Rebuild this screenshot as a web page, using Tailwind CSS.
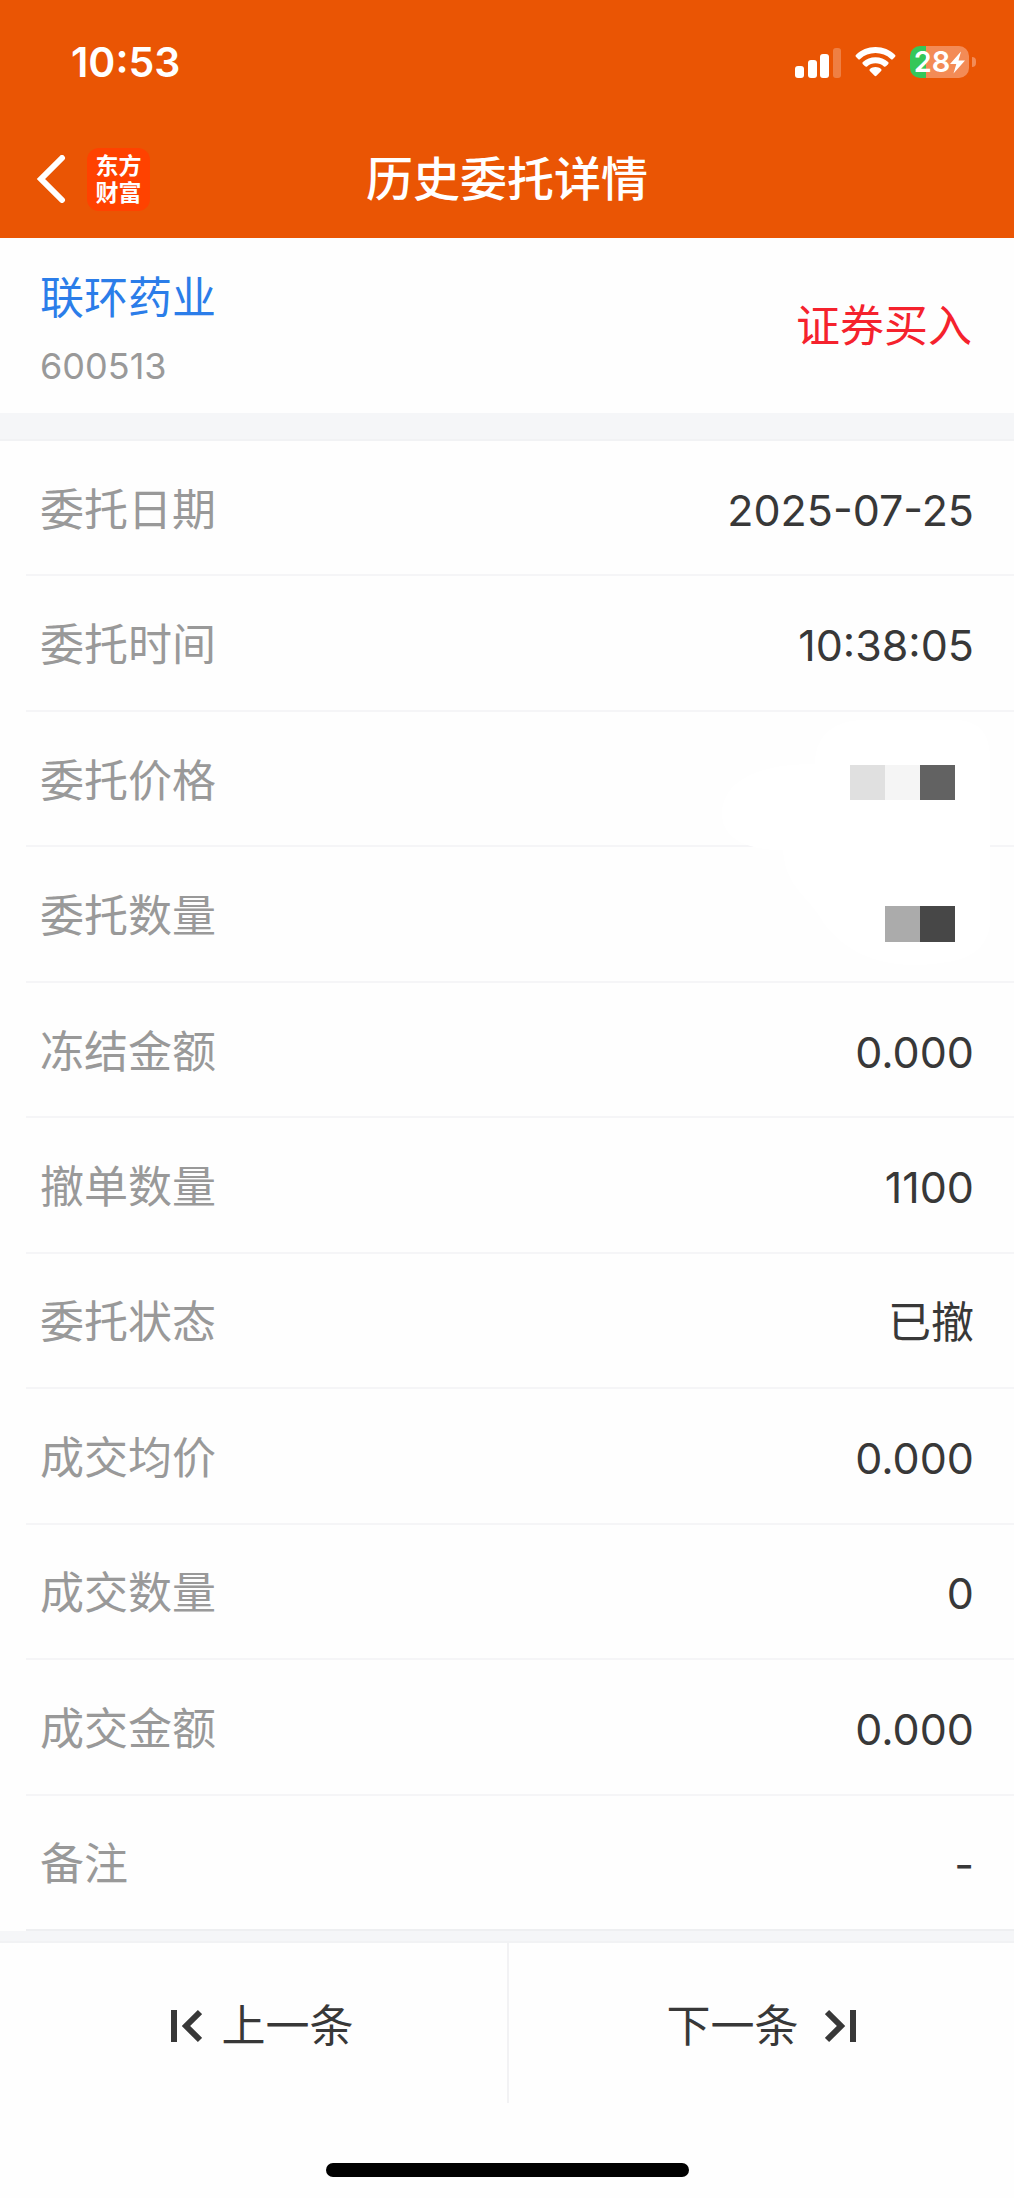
<!DOCTYPE html>
<html lang="zh-CN">
<head>
  <meta charset="UTF-8">
  <meta name="viewport" content="width=device-width, initial-scale=1.0">
  <title>历史委托详情</title>
  <script src="https://cdn.jsdelivr.net/npm/@tailwindcss/browser@4"></script>
</head>
<body class="min-h-screen flex flex-col bg-[#fefefe] text-[#383838] font-['Inter','Noto_Sans_CJK_SC',sans-serif]">

  <header class="bg-[#ea5504] text-white">
    <!-- Status bar -->
    <div class="h-[120px] pt-1 pl-[71px] pr-[38px] flex items-center justify-between">
      <span class="text-[41px] leading-[50px] font-semibold">10:53</span>
      <div class="flex items-center gap-[14px]">
        <svg class="w-[46px] h-[32px]" viewBox="0 0 46 32" fill="currentColor" aria-hidden="true">
          <rect x="0" y="20" width="9" height="12" rx="3"/>
          <rect x="13" y="14" width="9" height="18" rx="3"/>
          <rect x="25" y="8" width="9" height="24" rx="3"/>
          <rect x="38" y="2" width="8" height="30" rx="3" opacity=".25"/>
        </svg>
        <svg class="w-[41px] h-[31px]" viewBox="0 0 42 32" fill="currentColor" aria-hidden="true">
          <path d="M21 0C13 0 6 3 1 8c-.8.8-.8 1.500 0 2.300l2 2c.7.700 1.500.7 2.200 0C9.500 8.500 15 6.300 21 6.300s11.500 2.200 15.800 6c.7.700 1.500.7 2.200 0l2-2c.8-.8.8-1.500 0-2.300C36 3 29 0 21 0z"/>
          <path d="M21 10.500c-5 0-9.500 1.800-13 5-.7.700-.7 1.500 0 2.200l2.200 2.200c.7.600 1.400.6 2.100.1 2.400-2 5.400-3.200 8.700-3.200s6.300 1.200 8.700 3.200c.7.500 1.400.5 2.100-.1l2.200-2.200c.7-.7.7-1.500 0-2.200-3.500-3.200-8-5-13-5z"/>
          <path d="M21 20.700c-2.200 0-4.200.7-5.700 2-.7.600-.7 1.400-.1 2.100l4.600 4.700c.8.800 1.600.8 2.400 0l4.600-4.700c.6-.7.600-1.500-.1-2.100-1.500-1.300-3.500-2-5.700-2z"/>
        </svg>
        <div class="flex items-center gap-[3px]">
          <div class="w-[59px] h-[32px] rounded-[10px] flex items-center justify-center bg-linear-to-r from-[#34c759] from-27% to-[#f38b56] to-27%">
            <span class="text-[29px] leading-[32px] font-semibold">28</span>
            <svg class="w-[15px] h-[23px]" viewBox="0 0 15 22" fill="currentColor" aria-hidden="true">
              <path d="M11 0L0 12.500h6.300L3.500 22 15 9H8.500z"/>
            </svg>
          </div>
          <span class="w-[4px] h-[10px] rounded-r-full bg-[#f38b56]"></span>
        </div>
      </div>
    </div>

    <!-- Title bar -->
    <div class="h-[118px] px-[36px] grid grid-cols-[1fr_auto_1fr] items-center">
      <div class="flex items-center gap-[21px]">
        <button type="button" aria-label="返回">
          <svg class="w-[30px] h-[48px]" viewBox="0 0 30 48" fill="none" stroke="currentColor" stroke-width="6" stroke-linecap="round" aria-hidden="true">
            <path d="M26 3L5 24l21 21"/>
          </svg>
        </button>
        <a href="#" class="w-[63px] h-[63px] pb-[2px] rounded-[12px] bg-[#ff4200] flex flex-col items-center justify-center text-[23px] leading-[27px] font-bold font-['Noto_Sans_CJK_SC',sans-serif]">
          <span>东方</span>
          <span>财富</span>
        </a>
      </div>
      <h1 class="text-[47px] leading-[64px] font-medium">历史委托详情</h1>
    </div>
  </header>

  <section class="h-[175px] pl-[40px] pr-[42px] flex items-center justify-between">
    <div class="pt-[4px]">
      <a href="#" class="block text-[44px] leading-[64px] text-[#2b7de9]">联环药业</a>
      <p class="mt-[12px] text-[36px] leading-[48px] text-[#999999]">600513</p>
    </div>
    <span class="text-[44px] leading-[64px] text-[#f5222d]">证券买入</span>
  </section>

  <div class="h-[28px] bg-[#f5f6f8] border-b-2 border-[#f1f2f4]"></div>

  <dl class="flex-1 pl-[26px] grid auto-rows-fr text-[43px] leading-[64px]">
    <div class="pt-[4px] pl-[14px] pr-[40px] flex items-center justify-between border-b-2 border-[#f5f5f7]">
      <dt class="text-[44px] text-[#999999]">委托日期</dt>
      <dd>2025-07-25</dd>
    </div>
    <div class="pt-[4px] pl-[14px] pr-[40px] flex items-center justify-between border-b-2 border-[#f5f5f7]">
      <dt class="text-[44px] text-[#999999]">委托时间</dt>
      <dd>10:38:05</dd>
    </div>
    <div class="relative pt-[4px] pl-[14px] pr-[40px] flex items-center justify-between border-b-2 border-[#f5f5f7]">
      <dt class="text-[44px] text-[#999999]">委托价格</dt>
      <!-- Mosaic over the price and the quantity -->
      <dd class="absolute top-0 right-0 z-10">
        <svg class="w-[300px] h-[260px]" viewBox="0 0 300 260" role="img" aria-label="已隐藏">
          <path fill="#ffffff" d="M101 52C101 22 122 8 150 8h90c24 0 36 12 36 40v160c0 24-16 38-42 42-60 10-100-6-125-40-12-24-38-34-40-72-40 0-61-14-61-36 0-30 30-50 92-50z"/>
          <rect x="136" y="53" width="35" height="35" fill="#e0e0e0"/>
          <rect x="171" y="53" width="35" height="35" fill="#f5f5f5"/>
          <rect x="206" y="53" width="35" height="35" fill="#626262"/>
          <rect x="171" y="194" width="35" height="36" fill="#ababab"/>
          <rect x="206" y="194" width="35" height="36" fill="#474747"/>
        </svg>
      </dd>
    </div>
    <div class="pt-[4px] pl-[14px] pr-[40px] flex items-center justify-between border-b-2 border-[#f5f5f7]">
      <dt class="text-[44px] text-[#999999]">委托数量</dt>
      <dd></dd>
    </div>
    <div class="pt-[4px] pl-[14px] pr-[40px] flex items-center justify-between border-b-2 border-[#f5f5f7]">
      <dt class="text-[44px] text-[#999999]">冻结金额</dt>
      <dd>0.000</dd>
    </div>
    <div class="pt-[4px] pl-[14px] pr-[40px] flex items-center justify-between border-b-2 border-[#f5f5f7]">
      <dt class="text-[44px] text-[#999999]">撤单数量</dt>
      <dd>1100</dd>
    </div>
    <div class="pt-[4px] pl-[14px] pr-[40px] flex items-center justify-between border-b-2 border-[#f5f5f7]">
      <dt class="text-[44px] text-[#999999]">委托状态</dt>
      <dd>已撤</dd>
    </div>
    <div class="pt-[4px] pl-[14px] pr-[40px] flex items-center justify-between border-b-2 border-[#f5f5f7]">
      <dt class="text-[44px] text-[#999999]">成交均价</dt>
      <dd>0.000</dd>
    </div>
    <div class="pt-[4px] pl-[14px] pr-[40px] flex items-center justify-between border-b-2 border-[#f5f5f7]">
      <dt class="text-[44px] text-[#999999]">成交数量</dt>
      <dd>0</dd>
    </div>
    <div class="pt-[4px] pl-[14px] pr-[40px] flex items-center justify-between border-b-2 border-[#f5f5f7]">
      <dt class="text-[44px] text-[#999999]">成交金额</dt>
      <dd>0.000</dd>
    </div>
    <div class="pt-[4px] pl-[14px] pr-[40px] flex items-center justify-between border-b-2 border-[#eeeff1]">
      <dt class="text-[44px] text-[#999999]">备注</dt>
      <dd>-</dd>
    </div>
  </dl>

  <div class="h-[12px] bg-[#f5f6f8] border-b-2 border-[#f1f2f4]"></div>

  <footer class="pb-[21px]">
    <nav class="h-[160px] grid grid-cols-2 text-[44px] leading-[64px]">
      <button type="button" class="pt-[5px] pl-[16px] flex items-center justify-center gap-[20px]">
        <svg class="w-[32px] h-[34px]" viewBox="0 0 32 34" fill="none" stroke="currentColor" stroke-width="6" aria-hidden="true">
          <path d="M4 1v32M30 3L16 17l14 14"/>
        </svg>
        上一条
      </button>
      <button type="button" class="pt-[5px] flex items-center justify-center gap-[26px] border-l-2 border-[#f2f2f4]">
        下一条
        <svg class="w-[32px] h-[34px]" viewBox="0 0 32 34" fill="none" stroke="currentColor" stroke-width="6" aria-hidden="true">
          <path d="M28 1v32M2 3l14 14L2 31"/>
        </svg>
      </button>
    </nav>
    <!-- Home indicator -->
    <div class="mt-[60px] mx-auto w-[363px] h-[14px] rounded-full bg-black"></div>
  </footer>

</body>
</html>
